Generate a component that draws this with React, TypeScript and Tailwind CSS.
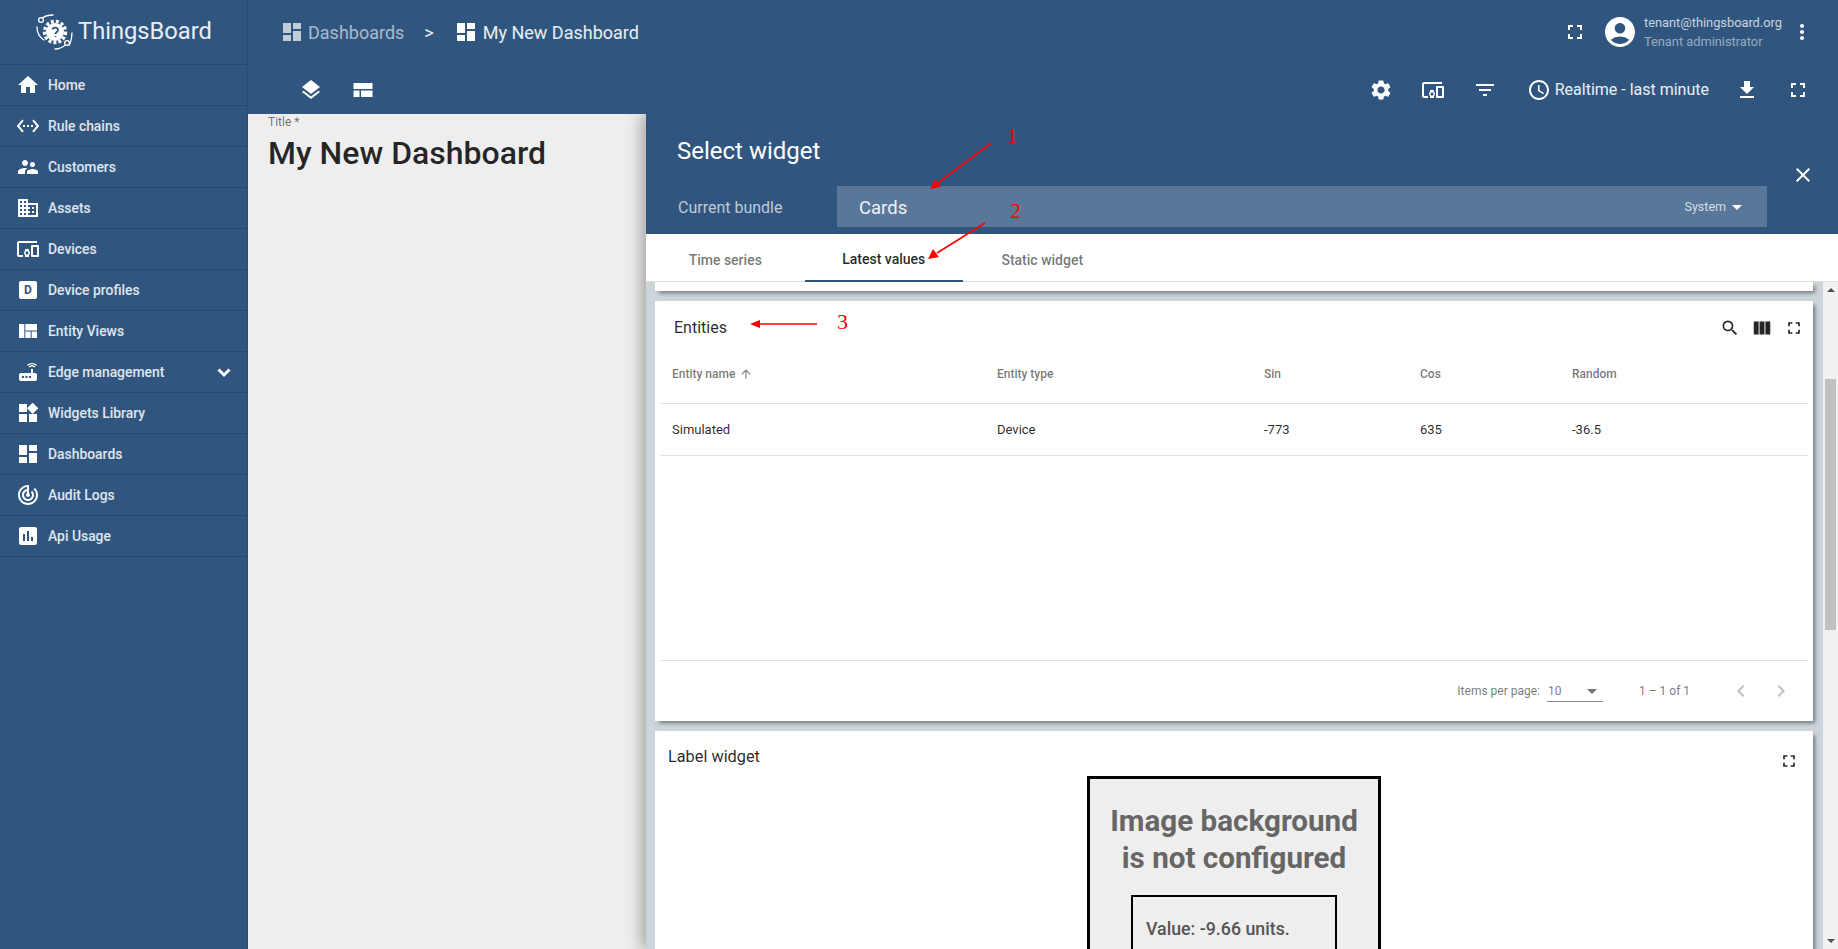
import React from 'react';
import {
  MdHome, MdSettingsEthernet, MdSupervisorAccount, MdDomain, MdDevicesOther, MdViewQuilt, MdRouter, MdWidgets,
  MdDashboard, MdTrackChanges, MdAssessment, MdLayers, MdFullscreen, MdAccountCircle,
  MdMoreVert, MdSettings, MdFilterList, MdAccessTime, MdFileDownload, MdClose, MdArrowDropDown,
  MdSearch, MdViewColumn, MdArrowUpward, MdChevronLeft, MdChevronRight,
} from 'react-icons/md';

const DeviceProfileIcon = () => (
  <span className="w-[18px] h-[18px] bg-white rounded-[2px] flex items-center justify-center text-[12px] leading-none font-bold text-[#305680]">
    D
  </span>
);

const navItems = [
  { label: 'Home', icon: <MdHome size={24} /> },
  { label: 'Rule chains', icon: <MdSettingsEthernet size={24} /> },
  { label: 'Customers', icon: <MdSupervisorAccount size={24} /> },
  { label: 'Assets', icon: <MdDomain size={24} /> },
  { label: 'Devices', icon: <MdDevicesOther size={24} /> },
  { label: 'Device profiles', icon: <DeviceProfileIcon /> },
  { label: 'Entity Views', icon: <MdViewQuilt size={24} /> },
  { label: 'Edge management', icon: <MdRouter size={24} />, expand: true },
  { label: 'Widgets Library', icon: <MdWidgets size={24} /> },
  { label: 'Dashboards', icon: <MdDashboard size={24} /> },
  { label: 'Audit Logs', icon: <MdTrackChanges size={24} /> },
  { label: 'Api Usage', icon: <MdAssessment size={24} /> },
];

const Logo = () => (
  <svg width="40" height="40" viewBox="0 0 40 40" className="text-white shrink-0">
    <g fill="none" stroke="currentColor" strokeWidth="1.3" strokeLinecap="round">
      <circle cx="5" cy="8" r="2.4" />
      <path d="M6.5 6 C9 4 13 3 17 3" />
      <path d="M1 15 C1 20 3 25 8 28" />
      <circle cx="31" cy="31" r="2.4" />
      <path d="M19 37 C23 37 27 35 29.5 33" />
      <path d="M36 21 C36 25 35 29 33.5 33" />
    </g>
    <circle cx="19" cy="20" r="9" fill="currentColor" />
    <circle cx="19" cy="20" r="10.5" fill="none" stroke="currentColor" strokeWidth="3.4" strokeDasharray="3 2" />
    <path d="M16.5 17.5 C17 15 22 15 22 18 C22 20 19.5 20 19.5 22 M19.5 24 L19.5 25" fill="none" stroke="#305680" strokeWidth="1.8" />
  </svg>
);

const Sidebar = () => (
  <aside className="w-[248px] shrink-0 h-full border-r border-black/10 bg-[#305680]">
    <div className="h-[65px] border-b border-black/15 flex items-center pl-[36px] gap-[2px]">
      <Logo />
      <span className="text-[23.7px] leading-none text-white/90 font-normal">ThingsBoard</span>
    </div>
    {navItems.map((item) => (
      <div key={item.label} className="h-[41px] border-b border-black/15 flex items-center pl-[16px] pr-[11px]">
        <span className="w-[24px] h-[24px] flex items-center justify-center text-white">{item.icon}</span>
        <span className="ml-[8px] text-[13.9px] font-medium text-white/85 flex-1">{item.label}</span>
        {item.expand && (
          <svg width="24" height="24" viewBox="0 0 24 24" fill="none" stroke="currentColor" strokeWidth="3" className="text-white">
            <path d="M6.5 9.5 L12 15 L17.5 9.5" />
          </svg>
        )}
      </div>
    ))}
  </aside>
);

const TopBar = () => (
  <header className="h-[114px] shrink-0 text-white">
    <div className="h-[64px] flex items-center pl-[32px]">
      <MdDashboard size={24} className="text-white/70" />
      <span className="ml-[4px] text-[18px] text-white/60">Dashboards</span>
      <span className="ml-[20px] text-[18px] text-white/90">&gt;</span>
      <MdDashboard size={24} className="ml-[20px]" />
      <span className="ml-[5px] text-[18px] text-white/90">My New Dashboard</span>
      <div className="ml-auto flex items-center">
        <MdFullscreen size={24} />
        <MdAccountCircle size={36} className="ml-[15px]" />
        <div className="ml-[6.5px] w-[144px]">
          <div className="text-[12.8px] leading-[19px] text-white/75">tenant@thingsboard.org</div>
          <div className="text-[12.8px] leading-[19px] text-white/50">Tenant administrator</div>
        </div>
        <MdMoreVert size={24} className="ml-[2px] mr-[24px]" />
      </div>
    </div>
    <div className="h-[50px] pt-[2px] flex items-center pl-[51px]">
      <span className="w-[24px] flex justify-center"><MdLayers size={24} /></span>
      <svg width="24" height="24" viewBox="0 0 24 24" className="ml-[28px]" fill="currentColor">
        <path d="M2.5 5h19v6h-19zM2.5 12.5h6v6.5h-6zM10 12.5h11.5v6.5H10z" />
      </svg>
      <div className="ml-auto flex items-center pr-[14px]">
        <span className="w-[51px] flex justify-center"><MdSettings size={24} /></span>
        <span className="w-[52px] flex justify-center"><MdDevicesOther size={24} /></span>
        <span className="w-[52px] flex justify-center"><MdFilterList size={24} /></span>
        <span className="ml-[16px] flex items-center gap-[4px]">
          <MdAccessTime size={24} />
          <span className="text-[16px] text-white/90">Realtime - last minute</span>
        </span>
        <span className="ml-[12px] w-[51px] flex justify-center"><MdFileDownload size={24} /></span>
        <span className="w-[52px] flex justify-center"><MdFullscreen size={24} /></span>
      </div>
    </div>
  </header>
);

const PanelHeader = () => (
  <div className="h-[120px] shrink-0 flex text-white">
    <div className="w-[1121px]">
      <div className="pt-[21px] pl-[31px] h-[72px] text-[24px] leading-[32px]">Select widget</div>
      <div className="flex items-center pl-[32px]">
        <span className="w-[159px] pt-[2px] text-[16px] text-white/70">Current bundle</span>
        <div className="w-[930px] h-[41px] bg-white/20 flex items-center pl-[22px] pr-[16px]">
          <span className="pt-[4px] text-[18.5px] flex-1 text-white/90">Cards</span>
          <span className="pt-[1px] text-[12.5px] text-white/75">System</span>
          <MdArrowDropDown size={24} className="ml-[-1px] mr-[2px]" />
        </div>
      </div>
    </div>
    <div className="flex-1 pt-[49px] flex justify-center">
      <MdClose size={24} />
    </div>
  </div>
);

const PanelTabs = () => (
  <div className="h-[48px] shrink-0 bg-white border-b border-[#e0e0e0] flex text-[14px] font-medium">
    <div className="w-[158.5px] pt-[5px] flex items-center justify-center text-black/55">Time series</div>
    <div className="w-[158.5px] h-[48px] pt-[5px] flex items-center justify-center text-black/85 border-b-2 border-[#305680]">Latest values</div>
    <div className="w-[158.5px] pt-[5px] flex items-center justify-center text-black/55">Static widget</div>
  </div>
);

const EntitiesCard = () => (
  <div className="h-[420px] shrink-0 bg-white shadow-[3px_3px_4px_-1px_rgba(0,0,0,0.45)] flex flex-col">
    <div className="h-[42px] pt-[12px] pl-[19px] pr-[8px] flex items-center">
      <span className="flex-1 text-[16px] text-black/85">Entities</span>
      <MdSearch size={20} className="mr-[1px] text-black/85" />
      <MdViewColumn size={22} className="ml-[10px] text-black/85" />
      <MdFullscreen size={20} className="ml-[11px] mr-[1px] text-black/85" />
    </div>
    <div className="mx-[5px] flex-1 flex flex-col">
      <div className="h-[61px] pt-[2px] border-b border-[#e0e0e0] pl-[12px] grid grid-cols-[325px_267px_156px_152px_1fr] items-center text-[12px] font-medium text-black/55">
        <span className="flex items-center">
          Entity name
          <MdArrowUpward size={14} className="ml-[4px] text-black/50" />
        </span>
        <span>Entity type</span>
        <span>Sin</span>
        <span>Cos</span>
        <span>Random</span>
      </div>
      <div className="h-[52px] border-b border-[#e0e0e0] pl-[12px] grid grid-cols-[325px_267px_156px_152px_1fr] items-center text-[13px] text-black/85">
        <span>Simulated</span>
        <span>Device</span>
        <span>-773</span>
        <span>635</span>
        <span>-36.5</span>
      </div>
      <div className="flex-1" />
      <div className="h-[61px] border-t border-[#e0e0e0] flex items-center justify-end pr-[7px] text-[12px] text-black/55">
        <span>Items per page:</span>
        <div className="ml-[7px] w-[56px] h-[21px] border-b border-black/45 flex items-center justify-between">
          <span className="ml-[1px]">10</span>
          <MdArrowDropDown size={24} className="text-black/55 mr-[-1px]" />
        </div>
        <span className="ml-[36px] w-[82px]">1 – 1 of 1</span>
        <span className="w-[40px] flex justify-center"><MdChevronLeft size={24} className="text-black/25" /></span>
        <span className="w-[40px] flex justify-center"><MdChevronRight size={24} className="text-black/25" /></span>
      </div>
    </div>
  </div>
);

const LabelCard = () => (
  <div className="flex-1 bg-white shadow-[3px_3px_4px_-1px_rgba(0,0,0,0.45)]">
    <div className="h-[45px] pl-[13px] pr-[14px] pt-[15px] flex items-start justify-between">
      <span className="text-[16.3px] leading-[22px] text-black/85">Label widget</span>
      <MdFullscreen size={20} className="mt-[5px] text-black/85" />
    </div>
    <div className="w-[294px] mx-auto border-[3px] border-black bg-[#eeeeee] h-[400px] pt-[24px] flex flex-col items-center">
      <div className="text-[29.6px] leading-[37px] font-bold text-[#666666] text-center whitespace-nowrap">
        Image background<br />is not configured
      </div>
      <div className="mt-[18px] w-[206px] h-[200px] border-2 border-black pl-[13px] pt-[22px] text-[17.8px] leading-[20px] font-medium text-[#555555]">
        Value: -9.66 units.
      </div>
    </div>
  </div>
);

const Scrollbar = () => (
  <div className="w-[15px] shrink-0 bg-[#f1f1f1] flex flex-col items-center pt-[6px] pb-[6px]">
    <span className="w-0 h-0 border-x-[4px] border-x-transparent border-b-[4px] border-b-[#505050]" />
    <div className="mt-[87px] w-[11px] h-[251px] bg-[#c1c1c1]" />
    <div className="flex-1" />
    <span className="w-0 h-0 border-x-[4px] border-x-transparent border-t-[4px] border-t-[#505050]" />
  </div>
);

const SelectPanel = () => (
  <section className="flex-1 min-w-0 flex flex-col bg-[#305680] shadow-[-5px_0_14px_rgba(0,0,0,0.3)] z-10">
    <PanelHeader />
    <PanelTabs />
    <div className="flex-1 min-h-0 flex">
      <div className="flex-1 min-w-0 bg-[#cbd5da] pl-[9px] pr-[10px] flex flex-col gap-[10px] overflow-hidden">
        <div className="h-[9px] shrink-0 bg-white shadow-[3px_3px_4px_-1px_rgba(0,0,0,0.45)]" />
        <EntitiesCard />
        <LabelCard />
      </div>
      <Scrollbar />
    </div>
  </section>
);

// the red notes drawn on top of the screenshot
const Annotations = () => (
  <>
    <svg className="absolute inset-0 z-20 pointer-events-none" width="1838" height="949" viewBox="0 0 1838 949" fill="#ff0000" stroke="none">
      <path d="M991 143 L938 183" stroke="#ff0000" strokeWidth="1.6" fill="none" />
      <path d="M930 189 L935 179 L941 187 Z" />
      <path d="M985 223 L937 253" stroke="#ff0000" strokeWidth="1.6" fill="none" />
      <path d="M928 259 L933 249 L939 257 Z" />
      <path d="M817 324 L760 324" stroke="#ff0000" strokeWidth="1.6" fill="none" />
      <path d="M750 324 L760 320 L760 328 Z" />
    </svg>
    <span className="absolute z-20 left-[1007px] top-[124px] text-[22px] leading-[24px] text-[#ff0000] font-['Liberation_Serif',serif]">1</span>
    <span className="absolute z-20 left-[1010px] top-[199px] text-[22px] leading-[24px] text-[#ff0000] font-['Liberation_Serif',serif]">2</span>
    <span className="absolute z-20 left-[837px] top-[310px] text-[22px] leading-[24px] text-[#ff0000] font-['Liberation_Serif',serif]">3</span>
  </>
);

export default function App() {
  return (
    <div className="relative w-[1838px] h-[949px] overflow-hidden flex bg-[#305680] font-['Roboto',sans-serif]">
      <Sidebar />
      <main className="flex-1 min-w-0 flex flex-col">
        <TopBar />
        <div className="flex-1 min-h-0 flex overflow-hidden">
          <div className="w-[398px] shrink-0 bg-[#eeeeee] pl-[20px]">
            <div className="text-[12px] leading-[14px] pt-[1px] text-black/55">Title *</div>
            <div className="mt-[4px] text-[32px] leading-[40px] font-medium text-black/85">My New Dashboard</div>
          </div>
          <SelectPanel />
        </div>
      </main>
      <Annotations />
    </div>
  );
}
